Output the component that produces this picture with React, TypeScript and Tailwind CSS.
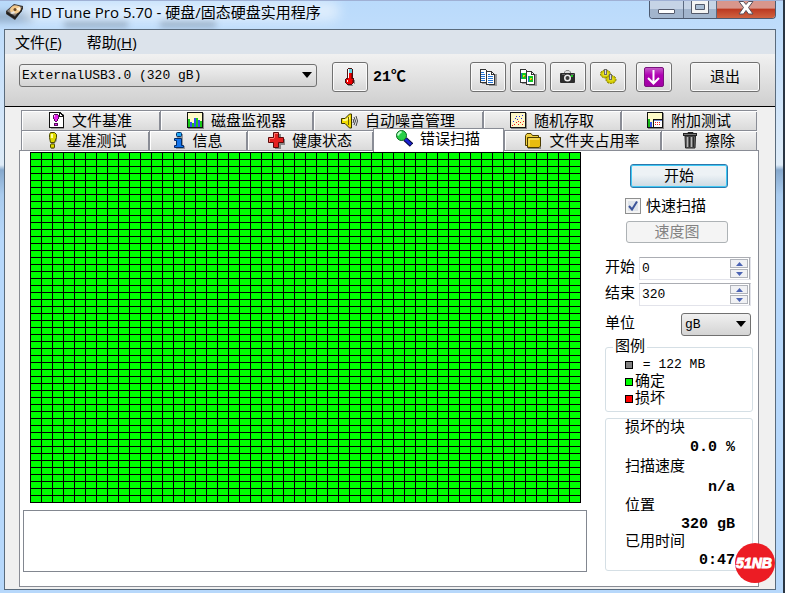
import React, { useState } from 'react'

const COLUMNS = 50
const ROWS = 50
const CELL_W = 11
const CELL_H = 7

// ---------- Icons ----------

const AppIcon = () => (
  <svg width="20" height="18" viewBox="0 0 20 18">
    <path d="M1 8 L9 1 L18 3 L18 6 L10 17 L1 11 Z" fill="#3a3532" />
    <path d="M2 8 L9 2 L17 4 L10 13 Z" fill="#8d8680" />
    <ellipse cx="10.500" cy="6.500" rx="5.500" ry="4" fill="#f3c98c" transform="rotate(-12 10.500 6.500)" />
    <path d="M10 6 L15 4 L15 8 Z" fill="#fff1d8" />
    <circle cx="10" cy="6.500" r="1.500" fill="#6a4a28" />
    <path d="M2 9 L10 14 L17 6 L17 8 L10 16 L2 11 Z" fill="#1e1c1b" />
    <path d="M5 10 L9 8 L10 10 L7 11 Z" fill="#e8e4df" />
  </svg>
)

const ThermometerIcon = () => (
  <svg width="10" height="18" viewBox="0 0 10 18" shapeRendering="crispEdges">
    <path d="M4 2h4v9h1v1h1v4h-1v1h-1v1h-5v-1h6v-5h-2z" fill="#8b8b8b" />
    <path d="M3 0h4v1h1v9h1v5h-1v1h-1v1h-5v-1h-1v-1h-1v-4h1v-1h1v-9h1z" fill="#4c1010" />
    <path d="M3 1h4v4h-4z" fill="#5fd5e2" />
    <path d="M3 5h4v6h1v4h-1v1h-5v-1h-1v-4h2z" fill="#f00000" />
    <path d="M3 1h1v9h-1zM2 12h1v2h-1z" fill="#ffffff" />
    <path d="M6 5h1v6h-1zM7 12h1v3h-1z" fill="#a00000" />
  </svg>
)

const PageShape = () => (
  <>
    <path d="M2 2h7v13h-7zM10 5h7v12h-8v-2h1z" fill="#999" />
    <path d="M0 0h6v1h1v1h1v12h-8z" fill="#333" />
    <path d="M1 1h5v2h1v10h-6z" fill="#fff" />
    <path d="M6 2h6v1h1v1h1v1h1v11h-9z" fill="#333" />
    <path d="M7 3h4v3h3v9h-7z" fill="#fff" />
    <path d="M12 4h1v1h-1z" fill="#fff" />
  </>
)

const CopyTextIcon = () => (
  <svg width="17" height="17" viewBox="0 0 17 17" shapeRendering="crispEdges">
    <PageShape />
    <path d="M1 3h3v1h-3zM1 5h4v1h-4zM1 7h4v1h-4zM1 9h4v1h-4zM1 11h4v1h-4zM8 5h2v1h-2zM8 7h5v1h-5zM8 9h5v1h-5zM8 11h5v1h-5zM8 13h5v1h-5z" fill="#2474d4" />
  </svg>
)

const CopyImageIcon = () => (
  <svg width="17" height="17" viewBox="0 0 17 17" shapeRendering="crispEdges">
    <PageShape />
    <path d="M1 4h5v6h-5zM8 7h5v6h-5z" fill="#12c822" />
    <path d="M1 4h1v6h-1zM8 7h1v6h-1z" fill="#1875c0" />
    <path d="M3 6h2v2h-2zM10 9h2v2h-2z" fill="#d5ec19" />
    <path d="M4 7h1v1h-1zM11 10h1v1h-1z" fill="#f04010" />
  </svg>
)

const CameraIcon = () => (
  <svg width="16" height="15" viewBox="0 0 16 15">
    <path d="M4.500 4V2L6 0.500H9L10.500 2V4" fill="#ddd" stroke="#888" />
    <rect x="0" y="3" width="15" height="10" rx="1" fill="#2c2c2c" />
    <path d="M2 4h3v1h-3zM11 4h3v1h-3z" fill="#666" />
    <circle cx="7.500" cy="8" r="3.500" fill="#eee" />
    <circle cx="7.500" cy="8" r="2" fill="#3a3a3a" />
    <path d="M11 5h2v2h-2z" fill="#18c820" />
  </svg>
)

const GearsIcon = () => (
  <svg width="17" height="16" viewBox="0 0 17 16">
    <ellipse cx="5.500" cy="5" rx="5" ry="4" fill="#cfc800" stroke="#777000" strokeWidth="1" strokeDasharray="2 1" />
    <ellipse cx="11" cy="10.500" rx="5" ry="4" fill="#cfc800" stroke="#777000" strokeWidth="1" strokeDasharray="2 1" />
    <ellipse cx="5.500" cy="5" rx="3" ry="2" fill="#eae334" />
    <ellipse cx="11" cy="10.500" rx="3" ry="2" fill="#e2da18" />
    <path d="M4 0h3v6h-3zM9 5h3v6h-3z" fill="#6a6a6a" />
    <path d="M5 1h1v4h-1zM10 6h1v4h-1z" fill="#ddd" />
  </svg>
)

const DownloadIcon = () => (
  <svg width="20" height="20" viewBox="0 0 20 20">
    <defs>
      <linearGradient id="dl" x1="0" y1="0" x2="0" y2="1">
        <stop offset="0" stopColor="#c560c8" />
        <stop offset="0.400" stopColor="#b100b4" />
        <stop offset="1" stopColor="#a000a4" />
      </linearGradient>
    </defs>
    <rect x="0.500" y="0.500" width="19" height="19" rx="1.500" fill="url(#dl)" stroke="#7a127d" />
    <path d="M9.500 3V16M4 11L9.500 16.500L15 11" fill="none" stroke="#fff" strokeWidth="2" />
  </svg>
)

const FileBenchIcon = () => (
  <svg width="16" height="17" viewBox="0 0 16 17" shapeRendering="crispEdges">
    <path d="M2 2h13v15h-13z" fill="#999" />
    <path d="M0 0h11l4 4v12h-15z" fill="#111" />
    <path d="M1 1h9v4h4v10h-13z" fill="#fff" />
    <path d="M11 2h1v1h1v1h-2z" fill="#fff" />
    <path d="M5 2h4v1h1v4h-1v2h-1v1h-2v-1h-1v-2h-1v-4h1zM5 11h4v3h-4z" fill="#54105c" />
    <path d="M5 3h4v4h-1v2h-2v-2h-1zM6 12h2v1h-2z" fill="#e420ec" />
    <path d="M5 3h1v2h-1z" fill="#ffb8ff" />
  </svg>
)

const MonitorIcon = () => (
  <svg width="17" height="17" viewBox="0 0 17 17" shapeRendering="crispEdges">
    <path d="M1 1h16v16h-16z" fill="#888" />
    <path d="M0 0h16v16h-16z" fill="#111" />
    <path d="M1 1h14v14h-14z" fill="#fffcc8" />
    <path d="M1 7h2v8h-2zM5 11h2v4h-2zM9 6h2v9h-2zM13 9h2v6h-2z" fill="#18c818" />
    <path d="M3 10h2v5h-2zM7 6h2v9h-2zM11 8h2v7h-2z" fill="#3550f0" />
  </svg>
)

const SpeakerIcon = () => (
  <svg width="17" height="16" viewBox="0 0 17 16">
    <path d="M0.500 5.500H4L8.500 1H10.500V15H8.500L4 10.500H0.500Z" fill="#f2dc00" stroke="#3a3500" />
    <path d="M2 6H5L9 3V6L5 8H2Z" fill="#fff98a" />
    <path d="M7.500 4V12" stroke="#6d6200" />
    <path d="M12 6Q13.500 8 12 10M13 4Q16 8 13 12M15 3Q18 8 15 13" fill="none" stroke="#444" />
  </svg>
)

const RandomIcon = () => (
  <svg width="17" height="17" viewBox="0 0 17 17" shapeRendering="crispEdges">
    <path d="M1 1h16v16h-16z" fill="#888" />
    <path d="M0 0h16v16h-16z" fill="#111" />
    <path d="M1 1h14v14h-14z" fill="#fff8c8" />
    <path d="M3 9h1v1h-1zM5 6h1v1h-1zM7 7h1v1h-1zM9 4h1v1h-1zM11 6h1v1h-1zM12 3h1v1h-1zM6 4h1v1h-1z" fill="#2030e0" />
    <path d="M2 13h1v1h-1zM4 12h1v1h-1zM6 10h1v1h-1zM8 12h1v1h-1zM10 10h1v1h-1zM12 12h1v1h-1zM13 9h1v1h-1zM8 9h1v1h-1z" fill="#f02020" />
  </svg>
)

const ExtraIcon = () => (
  <svg width="17" height="17" viewBox="0 0 17 17" shapeRendering="crispEdges">
    <path d="M1 1h16v16h-16z" fill="#888" />
    <path d="M0 0h16v16h-16z" fill="#111" />
    <path d="M1 1h14v6h-14zM1 7h5v8h-5z" fill="#fffcc8" />
    <path d="M1 7h2v8h-2z" fill="#18b818" />
    <path d="M3 10h2v5h-2z" fill="#3550f0" />
    <path d="M7 8h8v7h-8z" fill="#fff" />
    <path d="M7 8h8v1h-8z" fill="#7088d0" />
    <path d="M8 10h1v1h-1zM10 10h1v1h-1zM12 10h1v1h-1zM8 12h1v1h-1zM10 12h1v1h-1zM12 12h1v1h-1z" fill="#f02020" />
  </svg>
)

const BulbIcon = () => (
  <svg width="16" height="17" viewBox="0 0 16 17">
    <path d="M8 2h6v7l-2 2v4l-1 2h-3z" fill="#aaa" />
    <path d="M7.500 0.500H11.500L13.500 2.500V5.500L11.500 10.500H7.500L6.500 5.500V2.500Z" fill="#dcd800" stroke="#4c4a00" />
    <path d="M8 2h2v4h-2z" fill="#ffffa0" />
    <rect x="7.500" y="12" width="4" height="4" rx="1" fill="#dcd800" stroke="#4c4a00" />
  </svg>
)

const InfoIcon = () => (
  <svg width="12" height="17" viewBox="0 0 12 17">
    <path d="M4 2h6v12h2v3h-9z" fill="#999" />
    <rect x="3.500" y="0.500" width="5" height="4" rx="1" fill="#20a8f4" stroke="#022c68" />
    <path d="M1.500 6.500H8.500V13.500H10.500V15.500H1.500V13.500H3.500V8.500H1.500Z" fill="#1474ec" stroke="#022c68" />
  </svg>
)

const HealthIcon = () => (
  <svg width="17" height="17" viewBox="0 0 17 17">
    <path d="M7 2h6v5h4v6h-4v4h-6z" fill="#888" />
    <path d="M5.500 0.500H10.500V5.500H15.500V10.500H10.500V15.500H5.500V10.500H0.500V5.500H5.500Z" fill="#e42020" stroke="#5c0808" />
    <path d="M6.500 6V1.500H10M1.500 10V6.500H6" fill="none" stroke="#ff7a70" />
  </svg>
)

const MagnifierIcon = () => (
  <svg width="17" height="17" viewBox="0 0 17 17">
    <path d="M9 9L15.500 15" stroke="#08083c" strokeWidth="5" />
    <path d="M9 9L15 14.500" stroke="#1a22d0" strokeWidth="3" />
    <circle cx="5.500" cy="5.500" r="5" fill="#28d048" stroke="#0b6420" />
    <path d="M2 5.500Q2.500 2.500 5.500 2" fill="none" stroke="#c0ffd0" strokeWidth="2" />
  </svg>
)

const FolderIcon = () => (
  <svg width="17" height="16" viewBox="0 0 17 16">
    <path d="M3 4h13v12h-13z" fill="#888" />
    <path d="M0.500 12.500V2.500L2 0.500H6L7.500 2.500H13.500V12.500Z" fill="#f0d040" stroke="#4c3c00" />
    <path d="M2.500 14.500V4.500H15.500V13L14 14.500Z" fill="#e8bc10" stroke="#4c3c00" />
    <path d="M4 13V6H14" fill="none" stroke="#fff090" />
  </svg>
)

const TrashIcon = () => (
  <svg width="15" height="17" viewBox="0 0 15 17">
    <path d="M5 2V0.500H10V2" fill="none" stroke="#222" />
    <rect x="0.500" y="1.500" width="13" height="2" fill="#777" stroke="#222" />
    <path d="M2 4H12.500L12 16H2.500Z" fill="#666" stroke="#222" />
    <path d="M4.500 5V15M8.500 5V15" stroke="#b8b8b8" />
    <path d="M6.500 5V15M10.500 5V15" stroke="#2b2b2b" />
  </svg>
)

const DropArrow = () => (
  <svg width="10" height="6" viewBox="0 0 10 6" className="pointer-events-none absolute right-[5px] top-2">
    <path d="M0 0h10l-5 6z" fill="#000" />
  </svg>
)

// ---------- Small controls ----------

const ToolButton: React.FC<{ label: string; children: React.ReactNode }> = ({ label, children }) => (
  <button
    aria-label={label}
    className="flex h-[30px] w-9 shrink-0 items-center justify-center rounded-[3px] border border-[#707070] bg-gradient-to-b from-[#f3f3f3] via-[#e9e9e9] to-[#d6d6d6] shadow-[inset_0_0_0_1px_#fafafa]"
  >
    {children}
  </button>
)

type Tab = { label: string; icon: React.ReactNode; active?: boolean }

const backTabs: Tab[] = [
  { label: '文件基准', icon: <FileBenchIcon /> },
  { label: '磁盘监视器', icon: <MonitorIcon /> },
  { label: '自动噪音管理', icon: <SpeakerIcon /> },
  { label: '随机存取', icon: <RandomIcon /> },
  { label: '附加测试', icon: <ExtraIcon /> },
]

const frontTabs: Tab[] = [
  { label: '基准测试', icon: <BulbIcon /> },
  { label: '信息', icon: <InfoIcon /> },
  { label: '健康状态', icon: <HealthIcon /> },
  { label: '错误扫描', icon: <MagnifierIcon />, active: true },
  { label: '文件夹占用率', icon: <FolderIcon /> },
  { label: '擦除', icon: <TrashIcon /> },
]

const TabButton: React.FC<{ tab: Tab }> = ({ tab }) => (
  <button
    role="tab"
    aria-selected={!!tab.active}
    className={
      tab.active
        ? 'relative z-10 -mb-px -mt-0.5 flex items-center justify-center gap-[7px] whitespace-nowrap border-x border-t border-[#898c95] bg-white pb-1 pr-px leading-none'
        : 'flex h-5 items-center justify-center gap-[7px] whitespace-nowrap border-l border-t border-[#898c95] bg-gradient-to-b from-[#f2f2f2] to-[#dadada] pr-px leading-none shadow-[inset_1px_1px_0_#fff,inset_-1px_0_0_#898c95]'
    }
  >
    {tab.icon}
    <span className="pt-1">{tab.label}</span>
  </button>
)

const SpinField: React.FC<{ id: string; label: string; initial: number }> = ({ id, label, initial }) => {
  const [value, setValue] = useState(initial)
  return (
    <div className="flex items-center">
      <label htmlFor={id} className="w-[34px] leading-4">{label}</label>
      <div className="mr-0.5 flex h-[23px] flex-1 border border-[#e2e3ea] border-t-[#abadb3] bg-white">
        <input
          id={id}
          value={value}
          onChange={(e) => setValue(Number(e.target.value) || 0)}
          className="w-0 flex-1 px-0.5 text-[13px] outline-none"
        />
        <div className="flex w-5 flex-col gap-px border-r border-[#abadb3] py-px pr-px">
          <button
            aria-label={`${label} +`}
            onClick={() => setValue(value + 1)}
            className="flex flex-1 items-center justify-center border border-[#b0b3ba] bg-[#f0f1f4]"
          >
            <svg width="7" height="4" viewBox="0 0 7 4"><path d="M0 4h7l-3.500-4z" fill="#4c64b4" /></svg>
          </button>
          <button
            aria-label={`${label} -`}
            onClick={() => setValue(Math.max(0, value - 1))}
            className="flex flex-1 items-center justify-center border border-[#b0b3ba] bg-[#f0f1f4]"
          >
            <svg width="7" height="4" viewBox="0 0 7 4"><path d="M0 0h7l-3.500 4z" fill="#4c64b4" /></svg>
          </button>
        </div>
      </div>
    </div>
  )
}

const BlockMap = () => {
  const width = COLUMNS * CELL_W + 1
  const height = ROWS * CELL_H + 1
  return (
    <svg viewBox={`0 0 ${width} ${height}`} className="block h-auto w-full" shapeRendering="crispEdges">
      <defs>
        <pattern id="block" width={CELL_W} height={CELL_H} patternUnits="userSpaceOnUse">
          <rect width={CELL_W} height={CELL_H} fill="#000" />
          <rect x="1" y="1" width={CELL_W - 1} height={CELL_H - 1} fill="#00ff00" />
        </pattern>
      </defs>
      <rect width={width} height={height} fill="url(#block)" />
    </svg>
  )
}

// ---------- Window parts ----------

const TitleBar = () => (
  <header className="relative flex h-[29px] items-start overflow-hidden border-t border-[#9fb0d4] font-['Open_Sans','Noto_Sans_CJK_SC',sans-serif]">
    <div className="absolute -left-4 top-3 h-2 w-12 bg-[#55677c] opacity-50 blur-[4px]" />
    <div className="absolute left-16 top-5 h-1.5 w-16 bg-[#55677c] opacity-50 blur-[3px]" />
    <div className="absolute left-40 top-5 h-1.5 w-14 bg-[#55677c] opacity-50 blur-[3px]" />
    <div className="absolute left-5 top-0 h-5 w-[320px] rounded-full bg-white opacity-50 blur-[6px]" />
    <div className="relative flex items-center gap-[5px] pl-[5px] pt-px">
      <AppIcon />
      <h1 className="whitespace-nowrap text-[15px] leading-5 text-black">HD Tune Pro 5.70 - 硬盘/固态硬盘实用程序</h1>
    </div>
    <div className="relative ml-auto mr-[7px] flex h-[18px] overflow-hidden rounded-b-[4px] border border-t-0 border-[#4c5a70]">
      <button aria-label="最小化" className="flex w-[34px] items-end justify-center border-r border-[#5c6a80] bg-gradient-to-b from-[#c6d4e6] from-50% to-[#a2b5cd] to-50% pb-1">
        <span className="h-[5px] w-[17px] rounded-[1px] border border-[#53596a] bg-white" />
      </button>
      <button aria-label="最大化" className="flex w-[33px] items-start justify-center border-r border-[#5c6a80] bg-gradient-to-b from-[#c6d4e6] from-50% to-[#a2b5cd] to-50%">
        <svg width="18" height="13" viewBox="0 0 18 13">
          <path d="M0.500 -1h17v13.500h-17z" fill="#f4f4f4" stroke="#53596a" />
          <path d="M4.500 3.500h9v5h-9z" fill="#a9bdd4" stroke="#53596a" />
        </svg>
      </button>
      <button aria-label="关闭" className="flex w-[58px] items-start justify-center bg-gradient-to-b from-[#d8968c] from-40% via-[#bc3a22] via-50% to-[#d06240]">
        <svg width="16" height="14" viewBox="0 0 16 14">
          <path d="M1 0.500h4.500l2.500 3l2.500-3h4.500l-4.500 6l4.500 6.500h-4.500l-2.500-3.500l-2.500 3.500h-4.500l4.500-6.500z" fill="#fff" stroke="#55505c" />
        </svg>
      </button>
    </div>
  </header>
)

const Toolbar = () => (
  <div className="flex h-[53px] items-start border-b border-black bg-gradient-to-b from-[#f1f1f1] to-[#cfcfcf] pl-3.5 pr-[15px] pt-2">
    <div className="relative mt-0.5 min-w-0 max-w-[298px] flex-1">
      <select
        aria-label="硬盘"
        className="h-[23px] w-full appearance-none rounded-[3px] border border-[#707070] bg-gradient-to-b from-[#f0f0f0] to-[#d4d4d4] px-0.5 text-[13px] leading-5"
      >
        <option>ExternalUSB3.0 (320 gB)</option>
      </select>
      <DropArrow />
    </div>
    <div className="ml-[15px] flex items-center gap-[5px]">
      <ToolButton label="温度"><ThermometerIcon /></ToolButton>
      <span className="whitespace-nowrap pt-0.5 font-bold">21℃</span>
    </div>
    <div className="ml-auto flex gap-1">
      <ToolButton label="复制文本"><CopyTextIcon /></ToolButton>
      <ToolButton label="复制图像"><CopyImageIcon /></ToolButton>
      <ToolButton label="截图"><CameraIcon /></ToolButton>
      <ToolButton label="选项"><GearsIcon /></ToolButton>
    </div>
    <div className="ml-2.5 flex gap-[18px]">
      <ToolButton label="保存"><DownloadIcon /></ToolButton>
      <button className="h-[30px] w-[70px] rounded-[3px] border border-[#707070] bg-gradient-to-b from-[#f3f3f3] via-[#e9e9e9] to-[#d6d6d6] pt-0.5 leading-none shadow-[inset_0_0_0_1px_#fafafa]">
        退出
      </button>
    </div>
  </div>
)

const legend = [
  { color: 'bg-[#808080]', text: ' = 122 MB' },
  { color: 'bg-[#00ff00]', text: '确定' },
  { color: 'bg-[#ff0000]', text: '损坏' },
]

const Sidebar = () => (
  <aside className="w-[148px] shrink-0 pt-3">
    <div className="flex flex-col pl-5 pr-[25px]">
      <button className="ml-[5px] h-6 rounded-[3px] border border-[#2c78ac] bg-gradient-to-b from-[#edf2f5] from-45% to-[#cbd9e2] pt-0.5 leading-none shadow-[inset_0_0_0_1px_#40c8f4]">
        开始
      </button>
      <label className="mt-2.5 flex items-center gap-[5px] whitespace-nowrap leading-4">
        <span className="relative flex">
          <input
            type="checkbox"
            defaultChecked
            className="peer size-4 appearance-none border border-[#8e8f8f] bg-[#dfe4ea] shadow-[inset_0_0_0_2px_#f4f4f4]"
          />
          <svg width="16" height="16" viewBox="0 0 16 16" className="pointer-events-none absolute inset-0 hidden peer-checked:block">
            <path d="M4 8L7 11.500L12 3.500" fill="none" stroke="#3c5499" strokeWidth="2" />
          </svg>
        </span>
        <span className="h-4 pt-0.5">快速扫描</span>
      </label>
      <button disabled className="ml-px mt-[7px] h-[22px] rounded-[3px] border border-[#adb2b5] bg-[#f4f4f4] pt-0.5 leading-none text-[#838383]">
        速度图
      </button>
    </div>

    <div className="mt-3.5 flex flex-col gap-[3px]">
      <SpinField id="start" label="开始" initial={0} />
      <SpinField id="end" label="结束" initial={320} />
    </div>

    <div className="mt-[7px] flex items-center justify-between pr-0.5">
      <label htmlFor="unit" className="leading-4">单位</label>
      <div className="relative w-[70px]">
        <select
          id="unit"
          className="h-[23px] w-full appearance-none rounded-[3px] border border-[#707070] bg-gradient-to-b from-[#f0f0f0] to-[#d4d4d4] px-[3px] text-[13px] leading-5"
        >
          <option>gB</option>
          <option>mB</option>
        </select>
        <DropArrow />
      </div>
    </div>

    <fieldset className="mt-0.5 rounded-[3px] border border-[#d5dfe5] pb-1 pl-[19px]">
      <legend className="-ml-3 px-0.5 pt-0.5 leading-4">图例</legend>
      <ul>
        {legend.map((item) => (
          <li key={item.text} className="flex h-[17px] items-center gap-0.5 whitespace-pre leading-4">
            <span className={`size-2 border border-black ${item.color}`} />
            <span className={item.text.includes('MB') ? 'text-[13px]' : 'pt-0.5'}>{item.text}</span>
          </li>
        ))}
      </ul>
    </fieldset>

    <dl className="mt-1.5 rounded-[3px] border border-[#d5dfe5] pl-[19px] pr-[17px] pt-px leading-[18px]">
      <dt>损坏的块</dt>
      <dd className="text-right font-bold leading-5">0.0 %</dd>
      <dt className="leading-5">扫描速度</dt>
      <dd className="text-right font-bold leading-5">n/a</dd>
      <dt>位置</dt>
      <dd className="text-right font-bold">320 gB</dd>
      <dt>已用时间</dt>
      <dd className="text-right font-bold">0:47</dd>
    </dl>
  </aside>
)

const App: React.FC = () => {
  return (
    <div className="relative flex min-h-screen flex-col border-r-2 border-[#2a3644] bg-[linear-gradient(180deg,#b9dafb_0px,#c6e0fb_60px,#dfecf8_165px,#86a8cc_170px,#a9cbee_195px,#b7d8fb_240px)] font-['Liberation_Mono','Noto_Sans_CJK_SC',monospace] text-[15px] text-black">
      <TitleBar />
      <div className="ml-1 mr-[7px] mb-[3px] flex flex-1 flex-col border border-[#5a6b7c] bg-[#f0f0f0]">
        <nav className="flex h-6 items-center gap-[25px] bg-[#dce3eb] pl-2.5 font-['Open_Sans','Noto_Sans_CJK_SC',sans-serif] text-[15px] leading-5">
          <button>文件(<u>F</u>)</button>
          <button>帮助(<u>H</u>)</button>
        </nav>
        <Toolbar />

        <main className="flex flex-1 flex-col pb-0.5 pl-3.5 pr-4 pt-[3px]">
          {/* Tabs */}
          <div role="tablist" className="px-0.5">
            <div className="grid grid-cols-[139fr_153fr_170fr_138fr_136fr]">
              {backTabs.map((tab) => <TabButton key={tab.label} tab={tab} />)}
            </div>
            <div className="grid h-5 grid-cols-[128fr_98fr_126fr_131fr_157fr_96fr]">
              {frontTabs.map((tab) => <TabButton key={tab.label} tab={tab} />)}
            </div>
          </div>

          {/* Error scan panel */}
          <div className="flex flex-1 gap-[18px] border border-[#898c95] bg-white pb-3.5 pl-[3px] pr-[5px] pt-px">
            <div className="flex min-w-0 flex-1 flex-col gap-[7px]">
              <div className="pl-[7px] pr-1.5">
                <BlockMap />
              </div>
              <textarea
                readOnly
                aria-label="日志"
                className="block min-h-[62px] w-full flex-1 resize-none border border-[#828790] bg-white p-1 text-[13px] outline-none"
              />
            </div>
            <Sidebar />
          </div>
        </main>
      </div>

      {/* Site badge */}
      <svg width="42" height="42" viewBox="0 0 42 42" className="absolute bottom-[9px] right-[7px]">
        <circle cx="21" cy="21" r="20" fill="#ec1c24" />
        <text
          x="20"
          y="26"
          textAnchor="middle"
          fill="#fff"
          stroke="#fff"
          className="font-['Liberation_Sans',sans-serif] text-[14px] font-bold italic"
        >
          51NB
        </text>
      </svg>
    </div>
  )
}

export default App
